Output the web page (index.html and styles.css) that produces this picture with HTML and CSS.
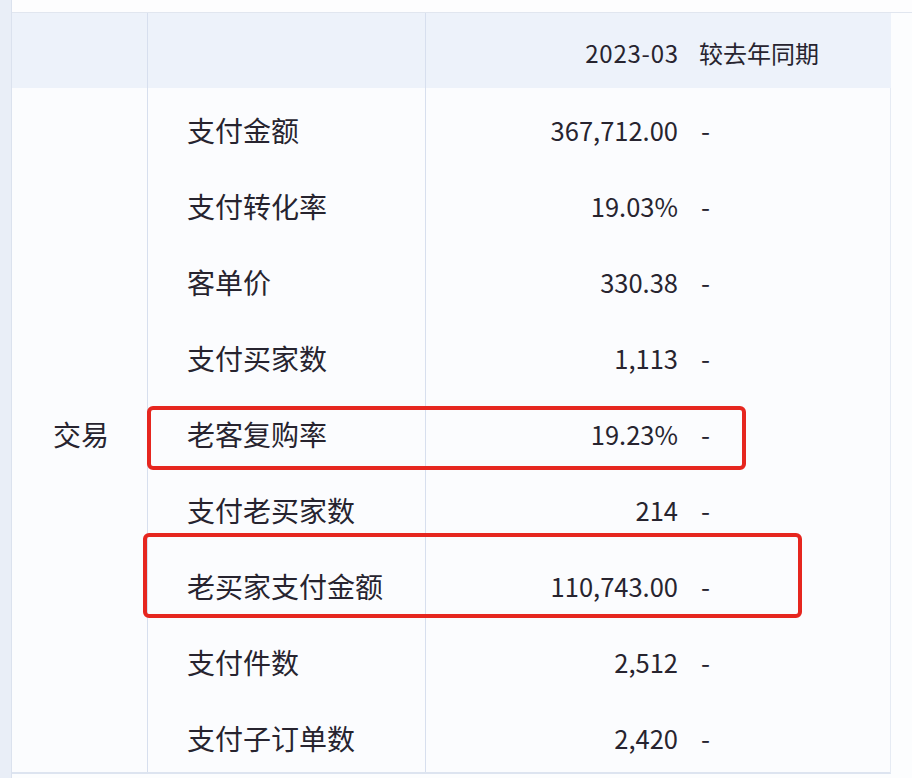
FILE: index.html
```html
<!DOCTYPE html>
<html lang="zh-CN">
<head>
<meta charset="utf-8">
<title>交易数据</title>
<link rel="stylesheet" href="styles.css">
</head>
<body>
<div class="page">
  <div class="side-strip"></div>
  <div class="main">
    <div class="top-strip"></div>
    <div class="table-wrap">
      <div class="grid">
        <div class="cell head c1"></div>
        <div class="cell head c2"></div>
        <div class="cell head c3 num">2023-03</div>
        <div class="cell head c4">较去年同期</div>

        <div class="cell c1 group">交易</div>

        <div class="cell c2 label">支付金额</div>
        <div class="cell c3 num">367,712.00</div>
        <div class="cell c4 dash">-</div>

        <div class="cell c2 label">支付转化率</div>
        <div class="cell c3 num">19.03%</div>
        <div class="cell c4 dash">-</div>

        <div class="cell c2 label">客单价</div>
        <div class="cell c3 num">330.38</div>
        <div class="cell c4 dash">-</div>

        <div class="cell c2 label">支付买家数</div>
        <div class="cell c3 num">1,113</div>
        <div class="cell c4 dash">-</div>

        <div class="cell c2 label">老客复购率</div>
        <div class="cell c3 num">19.23%</div>
        <div class="cell c4 dash">-</div>

        <div class="cell c2 label">支付老买家数</div>
        <div class="cell c3 num">214</div>
        <div class="cell c4 dash">-</div>

        <div class="cell c2 label">老买家支付金额</div>
        <div class="cell c3 num">110,743.00</div>
        <div class="cell c4 dash">-</div>

        <div class="cell c2 label">支付件数</div>
        <div class="cell c3 num">2,512</div>
        <div class="cell c4 dash">-</div>

        <div class="cell c2 label">支付子订单数</div>
        <div class="cell c3 num">2,420</div>
        <div class="cell c4 dash">-</div>
      </div>
      <div class="mark mark-1"></div>
      <div class="mark mark-2"></div>
    </div>
  </div>
</div>
</body>
</html>
```

FILE: styles.css
```css
* { box-sizing: border-box; }

html, body {
  margin: 0;
  padding: 0;
  background: #fdfdfe;
}

body {
  font-family: "Noto Sans CJK SC", "Noto Sans", sans-serif;
  color: #27242f;
}

.page {
  display: flex;
  width: 912px;
  height: 778px;
  overflow: hidden;
}

.side-strip {
  width: 12px;
  flex: none;
  background: #e9eef7;
  border-right: 1px solid #dbe2ee;
}

.main {
  flex: 1;
  display: flex;
  flex-direction: column;
  background: #fcfdfe;
}

.top-strip {
  height: 13px;
  flex: none;
  background: #fdfdfe;
  border-bottom: 1px solid #e1e6ef;
}

.table-wrap {
  position: relative;
}

.grid {
  display: grid;
  grid-template-columns: 136px 278px 263px 202px;
  grid-template-rows: 75px repeat(9, 76px);
  width: 879px;
  border-right: 1px solid #e6ebf3;
  border-bottom: 2px solid #dde4f0;
  background: #fbfcfe;
}

.cell {
  display: flex;
  align-items: center;
  padding-top: 8px;
  font-size: 28px;
  line-height: 1;
  white-space: nowrap;
}

.c1, .c2 {
  border-right: 1px solid #d7dfee;
}

.head {
  background: #edf2fa;
  padding-top: 4px;
  font-size: 24px;
}

.group {
  grid-row: 2 / span 9;
  grid-column: 1;
  padding-left: 41px;
}

.label {
  grid-column: 2;
  padding-left: 39px;
}

.num {
  justify-content: flex-end;
  padding-right: 11px;
  font-size: 25.5px;
}

.head.num {
  font-size: 24px;
  letter-spacing: 0.8px;
  padding-right: 10px;
}

.c4 {
  padding-left: 10px;
}

.dash {
  font-size: 26px;
  padding-left: 12px;
}

.mark {
  position: absolute;
  border: 4px solid #e6261f;
  border-radius: 6px;
}

.mark-1 {
  left: 135px;
  top: 393px;
  width: 599px;
  height: 64px;
}

.mark-2 {
  left: 131px;
  top: 520px;
  width: 659px;
  height: 85px;
}
```
